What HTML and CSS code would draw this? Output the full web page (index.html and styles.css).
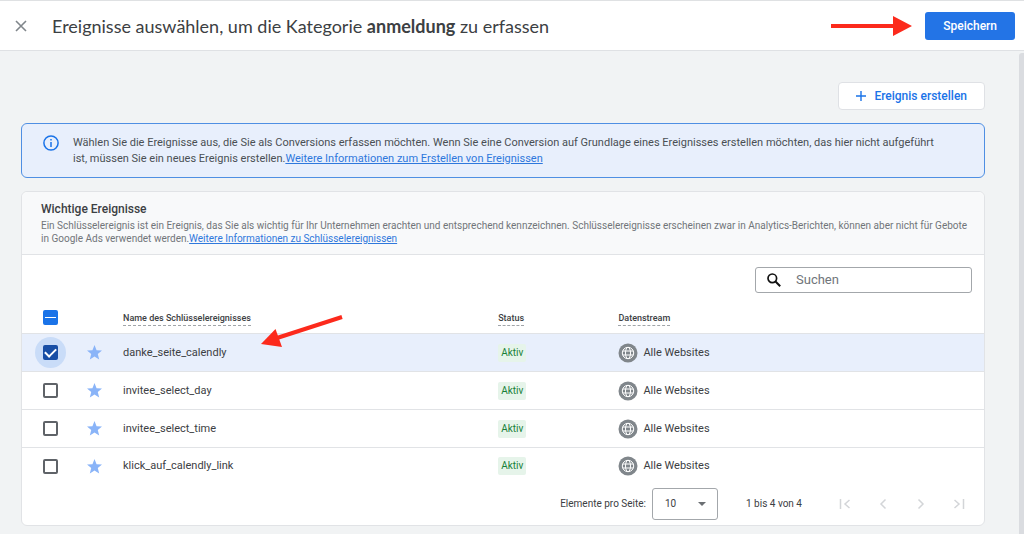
FILE: index.html
```html
<!DOCTYPE html>
<html lang="de">
<head>
<meta charset="utf-8">
<meta name="viewport" content="width=device-width, initial-scale=1">
<title>Ereignisse auswählen</title>
<link rel="stylesheet" href="styles.css">
</head>
<body>
<svg class="sprite" aria-hidden="true">
  <symbol id="star" viewBox="0 0 16 16"><path d="M8 0l2.200 5.500 5.800.3-4.500 3.800L13 15.400 8 12.200 3 15.400l1.500-5.800L0 5.800l5.800-.3z"/></symbol>
  <symbol id="globe" viewBox="0 0 20 20">
    <circle cx="10" cy="10" r="9.500" fill="#80868b"/>
    <g fill="none" stroke="#fff" stroke-width="1">
      <circle cx="10" cy="10" r="5.700"/>
      <ellipse cx="10" cy="10" rx="2.500" ry="5.700"/>
      <path d="M4.800 8h10.400M4.800 12h10.400"/>
    </g>
  </symbol>
</svg>

<header class="topbar">
  <button class="close" type="button" aria-label="Schließen">
    <svg width="12" height="12" viewBox="0 0 12 12"><path d="M1 1l10 10M11 1L1 11" fill="none" stroke="#80868b" stroke-width="1.600"/></svg>
  </button>
  <h1 class="title">Ereignisse auswählen, um die Kategorie <b>anmeldung</b> zu erfassen</h1>
  <svg class="save-arrow" width="82" height="20" viewBox="0 0 82 20" aria-hidden="true"><path d="M0 8h62V0l19 10-19 10v-8H0z" fill="#fc2a1c"/></svg>
  <button class="save" type="button">Speichern</button>
</header>

<div class="page">
  <main class="content">
    <div class="actions">
      <button class="create" type="button">
        <svg width="10" height="10" viewBox="0 0 10 10" aria-hidden="true"><path d="M5 0v10M0 5h10" stroke="#1a73e8" stroke-width="1.400"/></svg>
        Ereignis erstellen
      </button>
    </div>

    <section class="notice">
      <svg class="info" width="16" height="16" viewBox="0 0 16 16" aria-hidden="true"><circle cx="8" cy="8" r="7.100" fill="none" stroke="#1a73e8" stroke-width="1.500"/><path d="M8 7v5M8 4v1.600" stroke="#1a73e8" stroke-width="1.500"/></svg>
      <p>Wählen Sie die Ereignisse aus, die Sie als Conversions erfassen möchten. Wenn Sie eine Conversion auf Grundlage eines Ereignisses erstellen möchten, das hier nicht aufgeführt ist, müssen Sie ein neues Ereignis erstellen.<a href="#">Weitere Informationen zum Erstellen von Ereignissen</a></p>
    </section>

    <section class="card">
      <div class="card-head">
        <h2>Wichtige Ereignisse</h2>
        <p>Ein Schlüsselereignis ist ein Ereignis, das Sie als wichtig für Ihr Unternehmen erachten und entsprechend kennzeichnen. Schlüsselereignisse erscheinen zwar in Analytics-Berichten, können aber nicht für Gebote in Google Ads verwendet werden.<a href="#">Weitere Informationen zu Schlüsselereignissen</a></p>
      </div>

      <div class="toolbar">
        <label class="search">
          <svg width="14" height="14" viewBox="0 0 14 14" aria-hidden="true"><circle cx="5.300" cy="5.300" r="4.300" fill="none" stroke="#111" stroke-width="1.700"/><path d="M8.500 8.500l4.700 4.700" stroke="#111" stroke-width="2"/></svg>
          <input type="search" placeholder="Suchen" aria-label="Suchen">
        </label>
      </div>

      <table class="events">
        <colgroup><col class="c-check"><col class="c-star"><col class="c-name"><col class="c-status"><col></colgroup>
        <thead>
          <tr>
            <th class="pick"><input class="box partial" type="checkbox" aria-checked="mixed" aria-label="Alle auswählen"></th>
            <td></td>
            <th><span class="hint">Name des Schlüsselereignisses</span></th>
            <th><span class="hint">Status</span></th>
            <th><span class="hint">Datenstream</span></th>
          </tr>
        </thead>
        <tbody>
          <tr class="selected">
            <td class="pick"><span class="halo"><input class="box" type="checkbox" id="e1" checked></span></td>
            <td><svg class="star"><use href="#star"/></svg></td>
            <td class="name"><label for="e1">danke_seite_calendly</label>
              <svg class="row-arrow" width="84" height="36" viewBox="0 0 84 36" aria-hidden="true"><path d="M81 3L16 24" stroke="#fc2a1c" stroke-width="4"/><path d="M0 30l14.500-15 6.500 18z" fill="#fc2a1c"/></svg>
            </td>
            <td><span class="chip">Aktiv</span></td>
            <td><span class="stream"><svg class="globe"><use href="#globe"/></svg>Alle Websites</span></td>
          </tr>
          <tr>
            <td class="pick"><input class="box" type="checkbox" id="e2"></td>
            <td><svg class="star"><use href="#star"/></svg></td>
            <td><label for="e2">invitee_select_day</label></td>
            <td><span class="chip">Aktiv</span></td>
            <td><span class="stream"><svg class="globe"><use href="#globe"/></svg>Alle Websites</span></td>
          </tr>
          <tr>
            <td class="pick"><input class="box" type="checkbox" id="e3"></td>
            <td><svg class="star"><use href="#star"/></svg></td>
            <td><label for="e3">invitee_select_time</label></td>
            <td><span class="chip">Aktiv</span></td>
            <td><span class="stream"><svg class="globe"><use href="#globe"/></svg>Alle Websites</span></td>
          </tr>
          <tr>
            <td class="pick"><input class="box" type="checkbox" id="e4"></td>
            <td><svg class="star"><use href="#star"/></svg></td>
            <td><label for="e4">klick_auf_calendly_link</label></td>
            <td><span class="chip">Aktiv</span></td>
            <td><span class="stream"><svg class="globe"><use href="#globe"/></svg>Alle Websites</span></td>
          </tr>
        </tbody>
      </table>

      <div class="pager">
        <label for="size">Elemente pro Seite:</label>
        <span class="size">
          <select id="size"><option>10</option><option>25</option></select>
          <svg width="8" height="4" viewBox="0 0 8 4" aria-hidden="true"><path d="M0 0h8L4 4z" fill="#6b6f73"/></svg>
        </span>
        <span class="range">1 bis 4 von 4</span>
        <nav class="steps" aria-label="Seiten">
          <button type="button" disabled aria-label="Erste Seite"><svg viewBox="0 0 12 12"><path d="M1.500 1v10M10.500 2L6 6l4.500 4"/></svg></button>
          <button type="button" disabled aria-label="Vorherige Seite"><svg viewBox="0 0 12 12"><path d="M8.500 1.500L4 6l4.500 4.500"/></svg></button>
          <button type="button" disabled aria-label="Nächste Seite"><svg viewBox="0 0 12 12"><path d="M3.500 1.500L8 6l-4.500 4.500"/></svg></button>
          <button type="button" disabled aria-label="Letzte Seite"><svg viewBox="0 0 12 12"><path d="M1.500 2L6 6l-4.500 4M10.500 1v10"/></svg></button>
        </nav>
      </div>
    </section>
  </main>
  <div class="scroll-thumb"></div>
</div>
</body>
</html>
```

FILE: styles.css
```css
* { box-sizing: border-box; }
body {
  margin: 0;
  min-height: 100vh;
  display: flex;
  flex-direction: column;
  background: #f1f3f4;
  color: #3c4043;
  font: 11px/16px Roboto, "Liberation Sans", sans-serif;
}
h1, h2, p { margin: 0; }
button, input, select { font: inherit; color: inherit; }
button { cursor: pointer; }
a { color: #2f78dc; }
svg { display: block; flex: none; }
.sprite { position: absolute; width: 0; height: 0; }

.topbar {
  display: flex;
  align-items: center;
  min-height: 51px;
  padding: 0 9px 0 15px;
  background: #fff;
  border-top: 1px solid #dfe1e3;
  border-bottom: 1px solid #dfe1e4;
}
.close { padding: 0; border: 0; background: none; }
.title {
  flex: 1;
  margin-left: 25px;
  font-family: Lato, Roboto, sans-serif;
  font-size: 18px;
  line-height: 24px;
  font-weight: 400;
}
.title b { font-weight: 700; }
.save-arrow { margin-right: 12px; }
.save {
  height: 28px;
  padding: 0 18px;
  border: 0;
  border-radius: 3px;
  background: #2374e6;
  color: #fff;
  font-size: 12px;
  font-weight: 500;
}

.page { flex: 1; display: flex; }
.content { flex: 1; min-width: 0; padding: 31px 34px 8px 21px; }
.scroll-thumb {
  width: 5px;
  margin-top: 2px;
  background: #dadce0;
  border-radius: 3px 0 0 0;
}
.actions { display: flex; justify-content: flex-end; }
.create {
  display: flex;
  align-items: center;
  gap: 8px;
  height: 28px;
  padding: 0 17px;
  background: #fff;
  border: 1px solid #dfe1e5;
  border-radius: 4px;
  color: #1a73e8;
  font-size: 12px;
  font-weight: 500;
}

.notice {
  display: flex;
  gap: 14px;
  margin-top: 13px;
  padding: 11px 36px 10px 21px;
  background: #e8effc;
  border: 1px solid #4f8fe3;
  border-radius: 6px;
  color: #4a4f54;
}

.card {
  margin-top: 13px;
  background: #fff;
  border: 1px solid #e1e3e6;
  border-radius: 6px;
}
.card-head {
  padding: 8px 12px 9px 19px;
  background: #f8f9fa;
  border-bottom: 1px solid #e1e3e6;
  border-radius: 6px 6px 0 0;
}
.card-head h2 {
  margin-bottom: 1px;
  font-size: 12px;
  line-height: 18px;
  font-weight: 500;
}
.card-head p { font-size: 10px; line-height: 13px; color: #717579; }

.toolbar { display: flex; justify-content: flex-end; padding: 12px 12px 0; }
.search {
  display: flex;
  align-items: center;
  gap: 15px;
  width: 217px;
  height: 26px;
  padding: 0 11px;
  border: 1px solid #a3a7ab;
  border-radius: 3px;
}
.search input {
  flex: 1;
  min-width: 0;
  padding: 0;
  border: 0;
  outline: 0;
  background: none;
  font-size: 13px;
}
.search input::placeholder { color: #70757a; opacity: 1; }

.events { width: 100%; table-layout: fixed; border-collapse: collapse; }
.c-check { width: 56px; }
.c-star { width: 45px; }
.c-name { width: 39%; }
.c-status { width: 12.5%; }
.events td, .events th {
  height: 38px;
  padding: 1px 0 0;
  text-align: left;
  border-bottom: 1px solid #e1e3e6;
}
.events thead th, .events thead td { height: 40px; padding-top: 10px; }
.events tbody tr:last-child td { height: 37px; border-bottom: 0; }
.events .pick { text-align: center; }
.events .selected { background: #e8effc; }
.hint {
  display: inline-block;
  border-bottom: 1px dashed #a0a4a8;
  font-size: 9px;
  line-height: 14px;
  font-weight: 500;
}
.box {
  appearance: none;
  display: inline-grid;
  place-content: center;
  width: 15px;
  height: 15px;
  margin: 0;
  border: 2px solid #5f6368;
  border-radius: 2px;
  vertical-align: middle;
}
.box:checked { background: #174ea6; border-color: #174ea6; }
.box:checked::before {
  content: "";
  width: 9px;
  height: 5px;
  margin-bottom: 3px;
  border: solid #fff;
  border-width: 0 0 2px 2px;
  transform: rotate(-45deg);
}
.box.partial { background: #1a73e8; border-color: #1a73e8; }
.box.partial::before { content: ""; width: 11px; height: 1px; background: #fff; }
.halo {
  display: inline-grid;
  place-items: center;
  width: 31px;
  height: 31px;
  border-radius: 50%;
  background: #c9dcf8;
  vertical-align: middle;
}
.star { width: 15px; height: 15px; margin-left: 9px; fill: #8ab4f8; }
.globe { width: 20px; height: 20px; }
.name { position: relative; }
.row-arrow { position: absolute; left: 138px; top: -20px; }
.chip {
  display: inline-block;
  padding: 1px 3px;
  border-radius: 2px;
  background: #e6f4ea;
  color: #188038;
  font-size: 10px;
}
.stream { display: flex; align-items: center; gap: 5px; }

.pager {
  display: flex;
  align-items: center;
  justify-content: flex-end;
  padding: 4px 19px 5px;
  font-size: 10px;
}
.size { display: grid; align-items: center; margin-left: 6px; }
.size > * { grid-area: 1 / 1; }
.size svg { justify-self: end; margin-right: 12px; pointer-events: none; }
.size select {
  appearance: none;
  width: 66px;
  height: 32px;
  padding: 0 12px;
  border: 1px solid #a3a7ab;
  border-radius: 3px;
  background: #fff;
}
.range { margin-left: 28px; }
.steps { display: flex; gap: 26px; margin-left: 37px; }
.steps button { padding: 0; border: 0; background: none; }
.steps svg { width: 12px; height: 12px; fill: none; stroke: #d3d5d8; stroke-width: 1.5; }
```
